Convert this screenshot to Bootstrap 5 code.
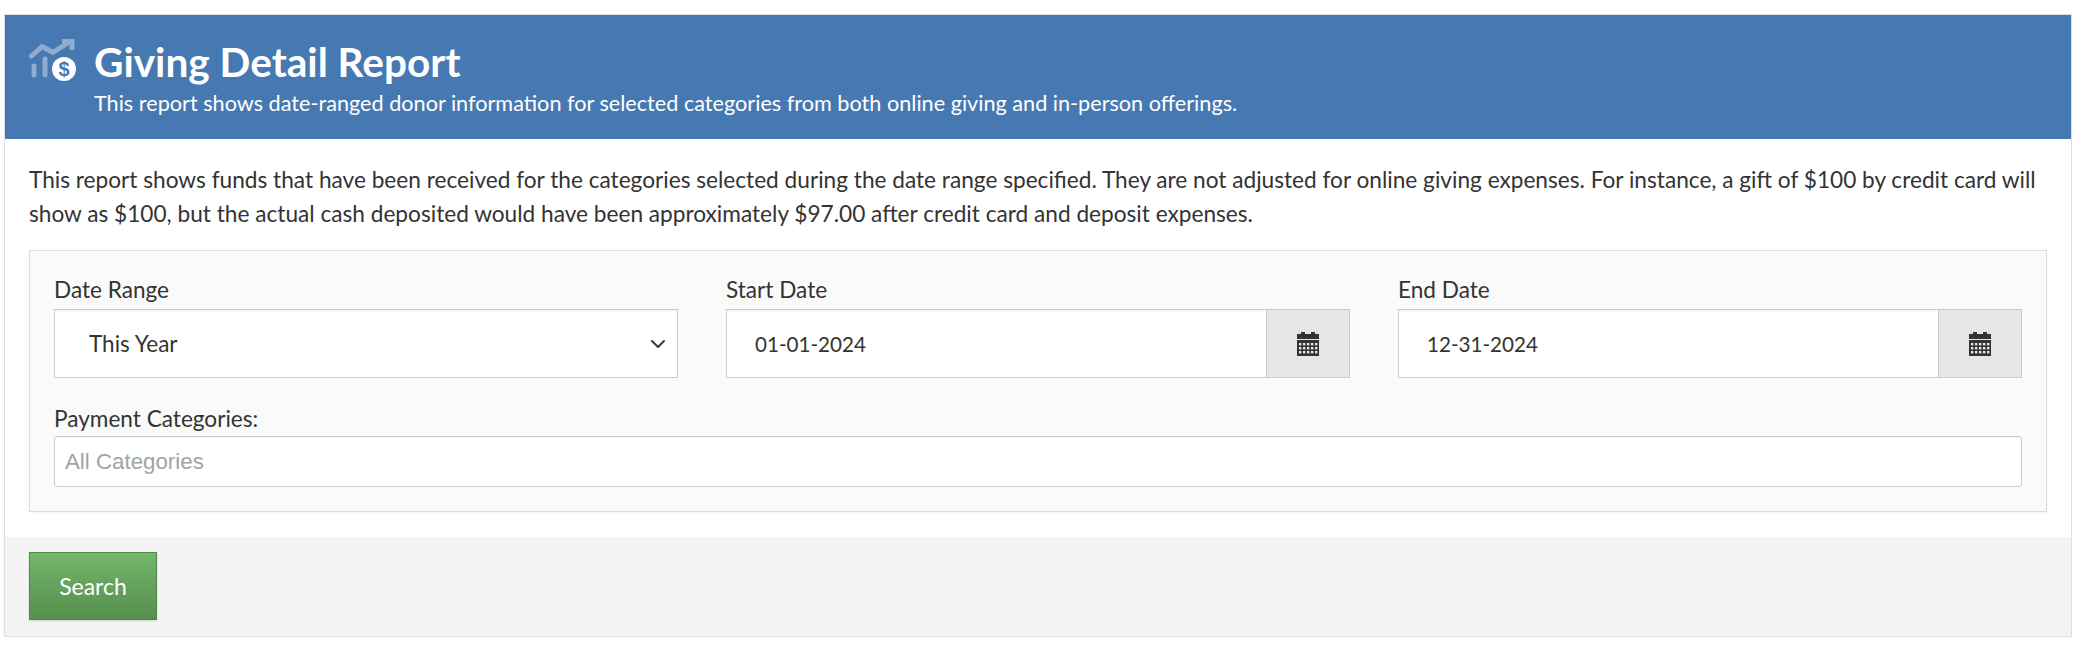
<!DOCTYPE html>
<html lang="en">
<head>
  <meta charset="UTF-8" />
  <title>Giving Detail Report</title>
  <link href="https://cdn.jsdelivr.net/npm/bootstrap@5.3.0/dist/css/bootstrap.min.css" rel="stylesheet">
  <style>
    body {
      background: #fff;
      font-family: "Lato", "Open Sans", sans-serif;
      color: #333;
    }
    .report-box {
      margin: 14px 26px 0 4px;
      border: 1px solid #ddd;
      box-shadow: 0 1px 2px rgba(0,0,0,.06);
    }
    .report-head {
      background: #4679b2;
      color: #fff;
      height: 124px;
      padding: 24px 0 0 24px;
    }
    .report-head h1 {
      font-size: 40.6px;
      font-weight: 700;
      line-height: 46px;
      margin: 0;
    }
    .report-head p {
      font-size: 21.65px;
      line-height: 26px;
      margin: 5px 0 0 0;
    }
    .head-icon { width: 48px; height: 44px; margin: 0 17px 0 0; flex: none; }
    .report-body { padding: 24px 24px 25px 24px; }
    .intro {
      font-size: 22.65px;
      line-height: 34px;
      margin: 0 0 19px 0;
    }
    .filter-well {
      background: #fafafa;
      border: 1px solid #ddd;
      padding: 26px 24px 24px 24px;
      box-shadow: 0 1px 2px rgba(0,0,0,.05);
    }
    .filter-well label {
      font-size: 22.6px;
      line-height: 26px;
      margin: 0 0 6px 0;
      display: block;
    }
    .filter-well .form-control, .filter-well .form-select {
      height: 69px;
      border: 1px solid #ccc;
      border-radius: 0;
      font-size: 20.6px;
      color: #333;
      padding-left: 28px;
      box-shadow: inset 0 1px 1px rgba(0,0,0,.05);
    }
    .filter-well .form-select {
      padding-left: 34px;
      font-size: 22.5px;
      background-size: 22px 16px;
      background-position: right 8px center;
    }
    .filter-well .input-group-text {
      width: 84px;
      justify-content: center;
      background: #e6e6e6;
      border: 1px solid #ccc;
      border-radius: 0;
    }
    .cal-icon { width: 22px; height: 24px; }
    .second-row { margin-top: 28px; }
    .second-row label { margin-bottom: 4px; }
    .filter-well .cat-input {
      height: 51px;
      border-radius: 3px;
      padding-left: 10px;
      font-family: "Liberation Sans", Arial, sans-serif;
      font-size: 22.3px;
    }
    .cat-input::placeholder { color: #a3a3a3; opacity: 1; }
    .report-foot {
      background: #f4f4f4;
      padding: 15px 24px 16px 24px;
    }
    .search-btn {
      width: 128px;
      height: 68px;
      border-radius: 0;
      border: 1px solid #4f8a47;
      background: linear-gradient(#74b66c, #568f4e);
      color: #fff;
      font-size: 23px;
      box-shadow: 0 1px 2px rgba(0,0,0,.15);
    }
  </style>
</head>
<body>

  <div class="report-box">
    <!-- Header -->
    <div class="report-head d-flex">
      <svg class="head-icon" viewBox="0 0 48 44" aria-hidden="true">
        <g fill="none" stroke="#8fabd0" stroke-width="5">
          <path d="M2.5 17 L13 7.5 L24 13.5 L41 2.5" stroke-linecap="round" stroke-linejoin="round" />
          <path d="M33 1.5 H43 V11" />
          <path d="M5 27 V36" stroke-linecap="round" />
          <path d="M16 20 V36" stroke-linecap="round" />
        </g>
        <circle cx="35" cy="30" r="12" fill="#fff" />
        <text x="35" y="37" text-anchor="middle" font-family="Liberation Sans, sans-serif" font-weight="700" font-size="20" fill="#4679b2">$</text>
      </svg>
      <div>
        <h1>Giving Detail Report</h1>
        <p>This report shows date-ranged donor information for selected categories from both online giving and in-person offerings.</p>
      </div>
    </div>

    <!-- Filters -->
    <div class="report-body">
      <p class="intro">This report shows funds that have been received for the categories selected during the date range specified. They are not adjusted for online giving expenses. For instance, a gift of $100 by credit card will show as $100, but the actual cash deposited would have been approximately $97.00 after credit card and deposit expenses.</p>
      <div class="filter-well">
        <div class="row gx-5">
          <div class="col-4">
            <label for="range">Date Range</label>
            <select id="range" class="form-select">
              <option>This Year</option>
            </select>
          </div>
          <div class="col-4">
            <label for="start">Start Date</label>
            <div class="input-group">
              <input id="start" class="form-control" value="01-01-2024">
              <span class="input-group-text">
                <svg class="cal-icon" viewBox="0 0 22 24"><path fill="#333" d="M4 0h4v2h6V0h4v2h4v5H0V2h4zM0 8h22v16H0z"/><g fill="#e6e6e6"><rect x="2" y="11" width="2.4" height="2.4"/><rect x="6" y="11" width="2.4" height="2.4"/><rect x="10" y="11" width="2.4" height="2.4"/><rect x="14" y="11" width="2.4" height="2.4"/><rect x="18" y="11" width="2.4" height="2.4"/><rect x="2" y="15" width="2.4" height="2.4"/><rect x="6" y="15" width="2.4" height="2.4"/><rect x="10" y="15" width="2.4" height="2.4"/><rect x="14" y="15" width="2.4" height="2.4"/><rect x="18" y="15" width="2.4" height="2.4"/><rect x="2" y="19" width="2.4" height="2.4"/><rect x="6" y="19" width="2.4" height="2.4"/><rect x="10" y="19" width="2.4" height="2.4"/><rect x="14" y="19" width="2.4" height="2.4"/><rect x="18" y="19" width="2.4" height="2.4"/></g></svg>
              </span>
            </div>
          </div>
          <div class="col-4">
            <label for="end">End Date</label>
            <div class="input-group">
              <input id="end" class="form-control" value="12-31-2024">
              <span class="input-group-text">
                <svg class="cal-icon" viewBox="0 0 22 24"><path fill="#333" d="M4 0h4v2h6V0h4v2h4v5H0V2h4zM0 8h22v16H0z"/><g fill="#e6e6e6"><rect x="2" y="11" width="2.4" height="2.4"/><rect x="6" y="11" width="2.4" height="2.4"/><rect x="10" y="11" width="2.4" height="2.4"/><rect x="14" y="11" width="2.4" height="2.4"/><rect x="18" y="11" width="2.4" height="2.4"/><rect x="2" y="15" width="2.4" height="2.4"/><rect x="6" y="15" width="2.4" height="2.4"/><rect x="10" y="15" width="2.4" height="2.4"/><rect x="14" y="15" width="2.4" height="2.4"/><rect x="18" y="15" width="2.4" height="2.4"/><rect x="2" y="19" width="2.4" height="2.4"/><rect x="6" y="19" width="2.4" height="2.4"/><rect x="10" y="19" width="2.4" height="2.4"/><rect x="14" y="19" width="2.4" height="2.4"/><rect x="18" y="19" width="2.4" height="2.4"/></g></svg>
              </span>
            </div>
          </div>
        </div>
        <div class="second-row">
          <label for="cats">Payment Categories:</label>
          <input id="cats" class="form-control cat-input" placeholder="All Categories">
        </div>
      </div>
    </div>

    <!-- Footer -->
    <div class="report-foot">
      <button class="btn search-btn" type="button">Search</button>
    </div>
  </div>

</body>
</html>
